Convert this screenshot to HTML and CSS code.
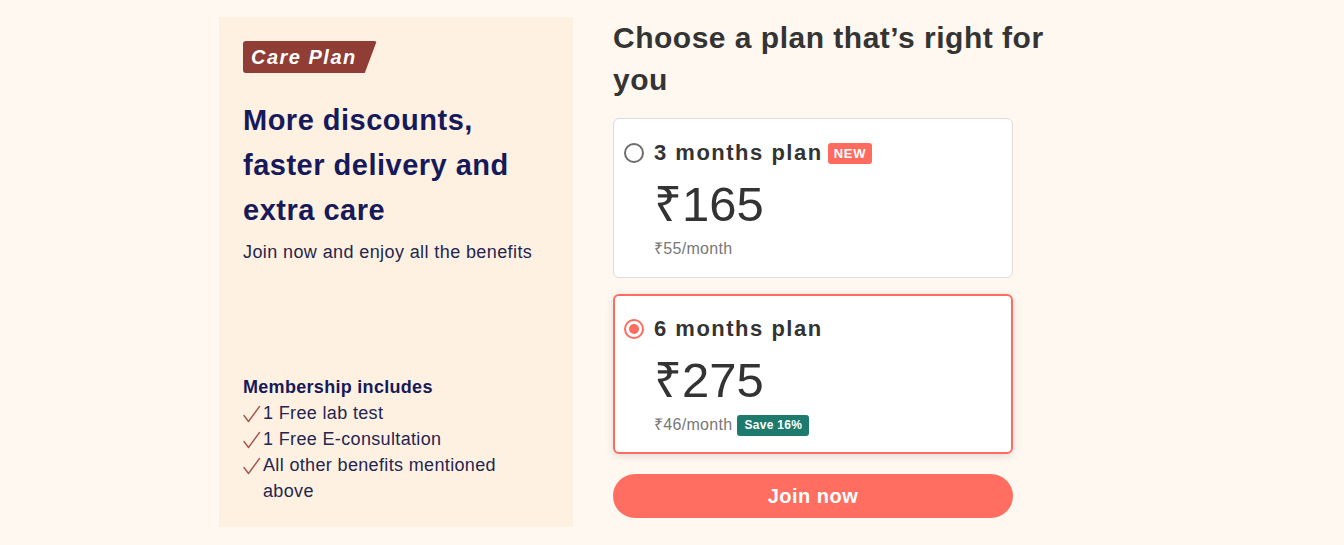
FILE: index.html
```html
<!DOCTYPE html>
<html lang="en">
<head>
<meta charset="utf-8">
<title>Care Plan</title>
<link rel="stylesheet" href="styles.css">
</head>
<body>
<main class="wrap">
  <section class="promo">
    <div class="promo-top">
      <span class="badge-care">Care Plan</span>
      <h1 class="promo-title">More discounts, faster delivery and extra care</h1>
      <p class="promo-sub">Join now and enjoy all the benefits</p>
    </div>
    <div class="includes">
      <h2 class="includes-title">Membership includes</h2>
      <ul class="includes-list">
        <li><svg class="tick" viewBox="0 0 18 18" width="18" height="18"><path d="M1 10.5 L5.5 16.5 L16.5 1.5" fill="none" stroke="#a4564e" stroke-width="1.4" stroke-linecap="round" stroke-linejoin="round"/></svg><span>1 Free lab test</span></li>
        <li><svg class="tick" viewBox="0 0 18 18" width="18" height="18"><path d="M1 10.5 L5.5 16.5 L16.5 1.5" fill="none" stroke="#a4564e" stroke-width="1.4" stroke-linecap="round" stroke-linejoin="round"/></svg><span>1 Free E-consultation</span></li>
        <li><svg class="tick" viewBox="0 0 18 18" width="18" height="18"><path d="M1 10.5 L5.5 16.5 L16.5 1.5" fill="none" stroke="#a4564e" stroke-width="1.4" stroke-linecap="round" stroke-linejoin="round"/></svg><span>All other benefits mentioned above</span></li>
      </ul>
    </div>
  </section>
  <section class="plans">
    <h2 class="plans-title">Choose a plan that’s right for you</h2>
    <div class="card">
      <div class="card-head">
        <span class="radio"></span>
        <span class="plan-name">3 months plan</span>
        <span class="tag-new">NEW</span>
      </div>
      <div class="price">₹165</div>
      <div class="per-month"><span>₹55/month</span></div>
    </div>
    <div class="card selected">
      <div class="card-head">
        <span class="radio on"></span>
        <span class="plan-name">6 months plan</span>
      </div>
      <div class="price">₹275</div>
      <div class="per-month"><span>₹46/month</span><span class="tag-save">Save 16%</span></div>
    </div>
    <button class="join">Join now</button>
  </section>
</main>
</body>
</html>
```
FILE: styles.css
```css
* { box-sizing: border-box; }
html, body { margin: 0; padding: 0; }
body {
  background: #fff8f1;
  font-family: "Liberation Sans", Arial, sans-serif;
  width: 1344px;
  height: 545px;
  overflow: hidden;
}
.wrap {
  display: flex;
  gap: 40px;
  padding: 17px 0 0 219px;
}
.promo {
  width: 354px;
  height: 510px;
  background: #fff1e2;
  padding: 24px 24px 23px 24px;
  display: flex;
  flex-direction: column;
  justify-content: space-between;
  color: #161a5a;
}
.badge-care {
  display: inline-block;
  background: #8f3d35;
  color: #fff;
  font-size: 20px;
  font-weight: bold;
  font-style: italic;
  letter-spacing: 1.5px;
  line-height: 32px;
  height: 32px;
  padding: 0 20px 0 8px;
  border-radius: 3px;
  clip-path: polygon(0 0, 100% 0, 91% 100%, 0 100%);
}
.promo-title {
  margin: 25px 0 0 0;
  font-size: 29px;
  line-height: 45px;
  font-weight: bold;
  letter-spacing: 0.5px;
  width: 290px;
}
.promo-sub {
  margin: 7px 0 0 0;
  font-size: 18px;
  line-height: 24px;
  letter-spacing: 0.4px;
  color: #23264f;
}
.includes-title {
  margin: 0;
  font-size: 18px;
  line-height: 24px;
  font-weight: bold;
  letter-spacing: 0.3px;
}
.includes-list {
  list-style: none;
  margin: 1px 0 0 0;
  padding: 0;
}
.includes-list li {
  display: flex;
  align-items: flex-start;
  font-size: 18px;
  line-height: 26px;
  letter-spacing: 0.35px;
  color: #23264f;
}
.includes-list span { width: 260px; }
.tick {
  flex: none;
  margin: 5px 2px 0 0;
}
.plans {
  width: 400px;
  display: flex;
  flex-direction: column;
}
.plans-title {
  margin: 0;
  font-size: 30px;
  line-height: 42px;
  font-weight: bold;
  letter-spacing: 0.5px;
  color: #343434;
  width: 440px;
}
.card {
  margin-top: 17px;
  background: #fff;
  border: 1px solid #dcdcdc;
  border-radius: 6px;
  padding: 21px 10px 18px 10px;
  height: 160px;
}
.card + .card { margin-top: 16px; }
.card.selected {
  border: 2px solid #ff6b5f;
  padding: 20px 9px 17px 9px;
  box-shadow: 0 2px 8px rgba(0,0,0,0.12);
}
.card-head {
  display: flex;
  align-items: center;
  height: 26px;
}
.radio {
  width: 20px;
  height: 20px;
  border: 2px solid #6d6d6d;
  border-radius: 50%;
  margin-right: 10px;
  display: flex;
  align-items: center;
  justify-content: center;
  flex: none;
}
.radio.on { border-color: #ff6b5f; }
.radio.on::after {
  content: "";
  width: 10px;
  height: 10px;
  border-radius: 50%;
  background: #ff6b5f;
}
.plan-name {
  font-size: 22px;
  font-weight: bold;
  letter-spacing: 1.5px;
  color: #333;
}
.tag-new {
  margin-left: 5px;
  background: #ff6b5f;
  color: #fff;
  font-size: 13px;
  font-weight: bold;
  letter-spacing: 0.8px;
  padding: 0 6px;
  line-height: 21px;
  border-radius: 3px;
}
.price {
  margin: 10px 0 0 30px;
  font-size: 49px;
  line-height: 56px;
  color: #333;
}
.per-month {
  margin: 6px 0 0 30px;
  display: flex;
  align-items: center;
  font-size: 16px;
  line-height: 22px;
  letter-spacing: 0.3px;
  color: #777;
}
.tag-save {
  margin-left: 5px;
  background: #1d7a6c;
  color: #fff;
  font-size: 12px;
  font-weight: bold;
  letter-spacing: 0.3px;
  padding: 0 7px;
  line-height: 21px;
  border-radius: 3px;
}
.join {
  margin-top: 20px;
  height: 44px;
  border: none;
  border-radius: 22px;
  background: #ff6e61;
  color: #fff;
  font-family: "Liberation Sans", Arial, sans-serif;
  font-size: 20px;
  font-weight: bold;
  letter-spacing: 0.5px;
  width: 400px;
}
```
